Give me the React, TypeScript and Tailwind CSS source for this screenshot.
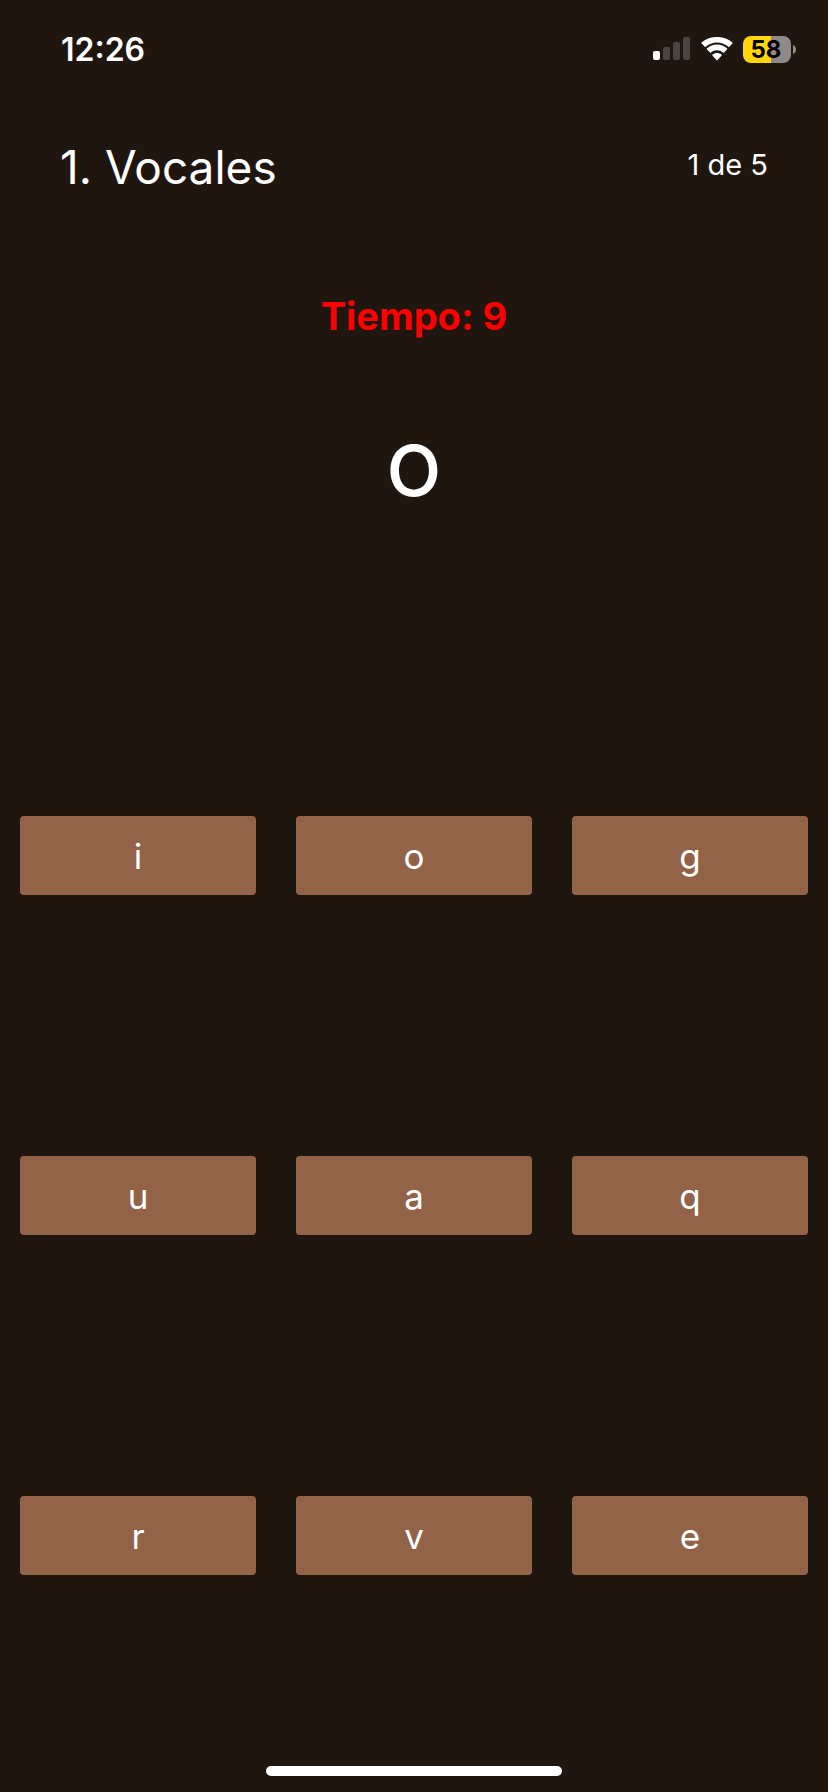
const letters = ["i", "o", "g", "u", "a", "q", "r", "v", "e"];

function SignalIcon() {
  return (
    <svg width="38" height="24" viewBox="0 0 38 24" aria-hidden="true">
      <rect x="0" y="14" width="7" height="9" rx="2" fill="#fff" />
      <rect x="10" y="10" width="7" height="13" rx="2" fill="#4c443f" />
      <rect x="20" y="5" width="7" height="18" rx="2" fill="#4c443f" />
      <rect x="30" y="0" width="7" height="23" rx="2" fill="#4c443f" />
    </svg>
  );
}

function WifiIcon() {
  return (
    <svg width="32" height="24" viewBox="0 0 32 24" fill="#fff" aria-hidden="true">
      <path d="M16 5.400c4.300 0 8.300 1.600 11.300 4.400.3.3.7.3 1 0l3.100-3.200c.3-.3.3-.8 0-1.100C22.800-1.900 9.200-1.900.6 5.500c-.3.3-.3.8 0 1.100l3.100 3.200c.3.3.7.3 1 0C7.700 7 11.700 5.400 16 5.400z" />
      <path d="M16 13.300c2.200 0 4.300.8 5.900 2.200.3.300.8.300 1.100 0l3-3.100c.3-.3.3-.8 0-1.100-5.600-5.200-14.400-5.200-20 0-.3.300-.3.800 0 1.100l3 3.100c.3.300.8.300 1.100 0 1.600-1.400 3.700-2.200 5.900-2.200z" />
      <path d="M20.500 18.700c.3-.3.3-.8 0-1.100-2.600-2.100-6.400-2.100-9 0-.3.300-.3.800 0 1.100l3.900 4.400c.4.400.8.400 1.200 0l3.900-4.400z" />
    </svg>
  );
}

function Battery() {
  return (
    <div className="flex items-center gap-0.5">
      <div className="flex h-[27px] w-12 items-center justify-center rounded-lg bg-linear-to-r from-[#ffd60a] from-58% to-[#8f8a88] to-58% pt-0.5 pr-0.5 text-2xl font-bold text-black">
        58
      </div>
      <svg width="3" height="9" viewBox="0 0 3 9" aria-hidden="true">
        <path d="M0 0c4 1.500 4 7.500 0 9z" fill="#8f8a88" />
      </svg>
    </div>
  );
}

export default function App() {
  return (
    <div className="flex min-h-screen flex-col bg-[#1f1610] font-['Inter','Liberation_Sans',sans-serif] text-white">
      <div className="flex h-[98px] items-center justify-between pr-8 pl-[61px]">
        <time className="pt-0.5 text-[32px] font-semibold">12:26</time>
        <div className="flex items-center gap-2.5">
          <SignalIcon />
          <WifiIcon />
          <Battery />
        </div>
      </div>

      <header className="flex h-[134px] items-center justify-between px-[60px]">
        <h1 className="pt-1 text-[46px]">1. Vocales</h1>
        <p className="text-[29px]">1 de 5</p>
      </header>

      <main className="flex grow flex-col">
        <section className="flex h-[453px] flex-col items-center gap-[70px] pt-14">
          <p className="text-[38px] font-bold text-[#ff0000]">Tiempo: 9</p>
          <p className="text-[94px] leading-none">o</p>
        </section>

        <div className="grid grow grid-cols-3 grid-rows-3 items-center gap-x-10 px-5">
          {letters.map((letter) => (
            <button
              key={letter}
              type="button"
              className="h-[79px] rounded-sm bg-[#926347] pt-0.5 text-[35px]"
            >
              {letter}
            </button>
          ))}
        </div>
      </main>

      <footer className="flex h-[87px] items-end justify-center pb-4">
        <div className="h-2.5 w-[296px] rounded-full bg-white" />
      </footer>
    </div>
  );
}
